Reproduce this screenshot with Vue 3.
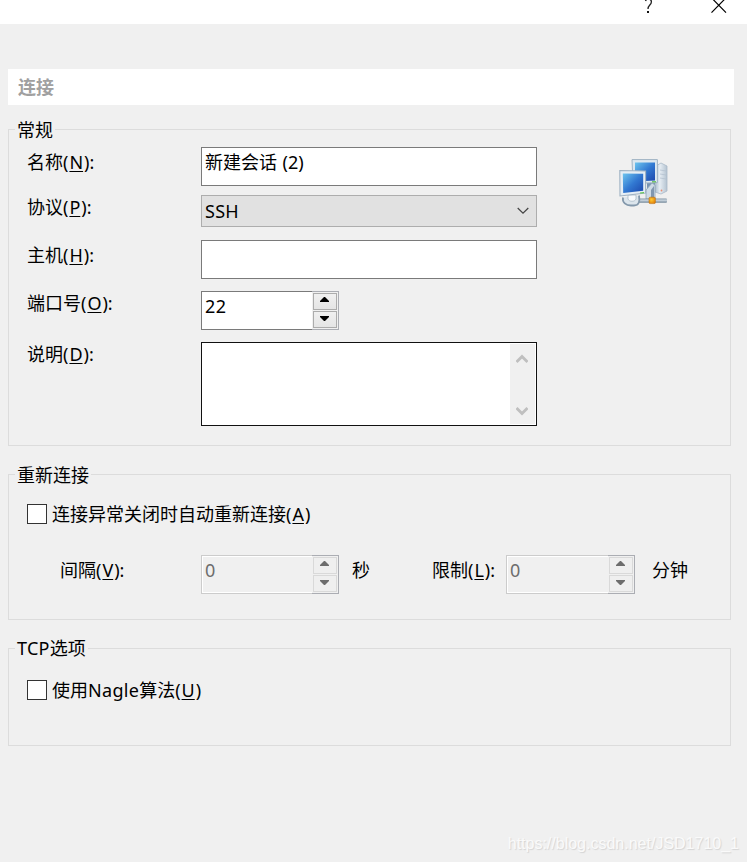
<script setup>
import { ref } from 'vue'

const sessionName = ref('新建会话 (2)')
const host = ref('')
const autoReconnect = ref(false)
const nagle = ref(false)
</script>

<template>
  <main class="dialog">
    <header class="titlebar">
      <svg class="help" width="12" height="24" viewBox="0 0 12 24">
        <path d="M1.5 1C2 -1.4 7.4 -1.8 7.4 1.8C7.4 5.2 4 5 4 9" fill="none" stroke="#222" stroke-width="1.3" />
        <path d="M3 11h2v2H3z" fill="#111" />
      </svg>
      <svg class="close" width="16" height="24" viewBox="0 0 16 24">
        <path d="M.5 -2.2L15 12.7M15 -2.2L.5 12.7" fill="none" stroke="#000" stroke-width="1.2" />
      </svg>
    </header>

    <h1 class="heading">连接</h1>

    <section class="group general">
      <h2 class="legend">常规</h2>
      <div class="fields">
        <div class="row r-name">
          <label class="label">名称(<u>N</u>):</label>
          <div class="box text">{{ sessionName }}</div>
        </div>
        <div class="row r-protocol">
          <label class="label">协议(<u>P</u>):</label>
          <div class="combo">
            <span class="latin">SSH</span>
            <svg width="12" height="8" viewBox="0 0 12 8"><path d="M.7 1L6 6.2L11.3 1" fill="none" stroke="#444" stroke-width="1.2" /></svg>
          </div>
        </div>
        <div class="row r-host">
          <label class="label">主机(<u>H</u>):</label>
          <div class="box text">{{ host }}</div>
        </div>
        <div class="row r-port">
          <label class="label">端口号(<u>O</u>):</label>
          <div class="spin">
            <div class="value">22</div>
            <div class="updown">
              <div class="btn up"><svg width="9" height="5" viewBox="0 0 9 5"><path d="M4 0h1l4 4v1H0V4z" /></svg></div>
              <div class="btn down"><svg width="9" height="5" viewBox="0 0 9 5"><path d="M0 0h9v1L5 5H4L0 1z" /></svg></div>
            </div>
          </div>
        </div>
        <div class="row r-desc">
          <label class="label">说明(<u>D</u>):</label>
          <div class="area">
            <div class="scroll">
              <svg width="12" height="10" viewBox="0 0 12 10"><path d="M.5 8L6 2.5L11.5 8" fill="none" stroke="#bfbfbf" stroke-width="2.9" /></svg>
              <svg width="12" height="10" viewBox="0 0 12 10"><path d="M.5 2L6 7.5L11.5 2" fill="none" stroke="#bfbfbf" stroke-width="2.9" /></svg>
            </div>
          </div>
        </div>
      </div>
      <svg class="network" width="50" height="50" viewBox="0 0 50 50">
        <defs>
          <linearGradient id="screen" x1="0" y1="0" x2="1" y2="1">
            <stop offset="0" stop-color="#6cc4ee" />
            <stop offset=".5" stop-color="#3279d2" />
            <stop offset="1" stop-color="#1c47ac" />
          </linearGradient>
          <linearGradient id="case" x1="0" y1="0" x2="1" y2="0">
            <stop offset="0" stop-color="#a9bccd" />
            <stop offset=".4" stop-color="#e6edf3" />
            <stop offset="1" stop-color="#b4c3d1" />
          </linearGradient>
          <linearGradient id="pipe" x1="0" y1="0" x2="0" y2="1">
            <stop offset="0" stop-color="#8496a6" />
            <stop offset=".4" stop-color="#cbd6df" />
            <stop offset="1" stop-color="#6f8496" />
          </linearGradient>
          <radialGradient id="node" cx=".4" cy=".4" r=".7">
            <stop offset="0" stop-color="#ffcb30" />
            <stop offset="1" stop-color="#e07a08" />
          </radialGradient>
        </defs>
        <path d="M37 7l5-3 6 3v25l-6 3-6-2z" fill="url(#case)" stroke="#a9b9c8" stroke-width=".8" />
        <path d="M41 11l6 1M41 15l6 1M41 19l6 1" stroke="#b4c2cf" stroke-width=".8" />
        <circle cx="42.5" cy="31.5" r=".9" fill="#ec8d70" />
        <path d="M28 24h8v14h-8z" fill="#7793b2" />
        <path d="M13 .6h25.4v23L14 24.5z" fill="#dde8f0" stroke="#9fb2c3" stroke-width="1" />
        <path d="M16 3.6h20v18L16 22.4z" fill="url(#screen)" />
        <path d="M33 22.8h4" stroke="#58bd48" stroke-width="1.2" />
        <path d="M27 31l6-7 3 2v14h-9z" fill="#cedbe6" stroke="#8ea3b8" stroke-width=".8" />
        <path d="M32 31l3-4v12h-3z" fill="#8097b0" />
        <rect x="14" y="39.5" width="34" height="4.3" rx="1" fill="url(#pipe)" />
        <path d="M4 38.5c-1 5 3 8 8 8h3c5 0 6-4 5-10" fill="#dce5ec" stroke="#8398ab" stroke-width="1.8" />
        <path d="M9 36h8v4c-1 3-7 3-8 0z" fill="#f8fafc" stroke="#a2b3c2" stroke-width=".7" />
        <path d="M.8 11.5L26.6 12V34L1 37z" fill="#e5eef5" stroke="#9fb2c3" stroke-width="1.1" />
        <path d="M3.8 14.6l20.4.2v17L4.2 34z" fill="url(#screen)" />
        <path d="M21 34l4-.4" stroke="#63c94e" stroke-width="1.2" />
        <rect x="30" y="38.2" width="6.4" height="6.4" rx="1.2" fill="url(#node)" stroke="#be7617" stroke-width=".6" />
      </svg>
    </section>

    <section class="group reconnect">
      <h2 class="legend">重新连接</h2>
      <label class="check">
        <span class="tick" role="checkbox" :aria-checked="autoReconnect"></span>
        <span>连接异常关闭时自动重新连接(<u>A</u>)</span>
      </label>
      <div class="timing">
        <span class="t-interval">间隔(<u>V</u>):</span>
        <div class="spin off">
          <div class="value">0</div>
          <div class="updown">
            <div class="btn up"><svg width="9" height="5" viewBox="0 0 9 5"><path d="M4 0h1l4 4v1H0V4z" /></svg></div>
            <div class="btn down"><svg width="9" height="5" viewBox="0 0 9 5"><path d="M0 0h9v1L5 5H4L0 1z" /></svg></div>
          </div>
        </div>
        <span class="t-sec">秒</span>
        <span class="t-limit">限制(<u>L</u>):</span>
        <div class="spin off narrow">
          <div class="value">0</div>
          <div class="updown">
            <div class="btn up"><svg width="9" height="5" viewBox="0 0 9 5"><path d="M4 0h1l4 4v1H0V4z" /></svg></div>
            <div class="btn down"><svg width="9" height="5" viewBox="0 0 9 5"><path d="M0 0h9v1L5 5H4L0 1z" /></svg></div>
          </div>
        </div>
        <span class="t-min">分钟</span>
      </div>
    </section>

    <section class="group tcp">
      <h2 class="legend"><span class="latin">TCP</span>选项</h2>
      <label class="check">
        <span class="tick" role="checkbox" :aria-checked="nagle"></span>
        <span>使用<span class="latin">Nagle</span>算法(<u>U</u>)</span>
      </label>
    </section>

    <footer class="watermark">https://blog.csdn.net/JSD1710_1</footer>
  </main>
</template>

<style>
body {
  margin: 0;
  background: #f0f0f0;
}
</style>

<style scoped>
* {
  box-sizing: border-box;
}
.dialog {
  display: flex;
  flex-direction: column;
  width: 747px;
  height: 862px;
  overflow: hidden;
  background: #f0f0f0;
  color: #000;
  font: 400 18px/24px "Noto Sans", "Noto Sans CJK SC", sans-serif;
  white-space: nowrap;
}
svg {
  display: block;
  flex: none;
}
u {
  margin: 0 1px;
  text-decoration-thickness: 1px;
  text-underline-offset: 2px;
}
.latin {
  letter-spacing: .3px;
}
.titlebar {
  display: flex;
  justify-content: flex-end;
  gap: 55px;
  height: 24px;
  padding-right: 20px;
  background: #fff;
}
.heading {
  height: 36px;
  margin: 45px 13px 0 8px;
  padding: 6px 10px;
  background: #fff;
  color: #a0a0a0;
  font-size: 18px;
  font-weight: 700;
}
.group {
  position: relative;
  width: 723px;
  margin-left: 8px;
  border: 1px solid #dcdcdc;
}
.legend {
  position: absolute;
  top: -12px;
  left: 6px;
  margin: 0;
  padding: 0 2px;
  background: #f0f0f0;
  font-size: 18px;
  font-weight: 400;
}
.tcp .legend {
  top: -13px;
}
.general {
  display: flex;
  height: 317px;
  margin-top: 24px;
  padding: 17px 0 0 18px;
}
.fields {
  width: 510px;
}
.row {
  display: flex;
  align-items: flex-start;
}
.label {
  width: 174px;
  padding-top: 3px;
}
.r-protocol {
  margin-top: 9px;
}
.r-protocol .label,
.r-port .label,
.r-desc .label {
  padding-top: 0;
}
.r-host {
  margin-top: 13px;
}
.r-port {
  margin-top: 12px;
}
.r-desc {
  margin-top: 12px;
}
.box {
  width: 336px;
  height: 39px;
  padding: 2px 3px;
  border: 1px solid #7a7a7a;
  background: #fff;
  word-spacing: .8px;
}
.combo {
  display: flex;
  align-items: center;
  justify-content: space-between;
  width: 336px;
  height: 32px;
  padding: 0 7px 0 3px;
  border: 1px solid #adadad;
  background: #e1e1e1;
}
.spin {
  display: flex;
  width: 138px;
  height: 39px;
}
.value {
  flex: 1;
  padding: 2px 3px;
  border: 1px solid #7a7a7a;
  border-right: 0;
  background: #fff;
  letter-spacing: .4px;
}
.updown {
  display: flex;
  flex-direction: column;
  gap: 1px;
  width: 27px;
  padding: 1px 1px 1px 1px;
  border: 1px solid #abadb3;
  border-left: 0;
  background: #f0f0f0;
}
.btn {
  display: flex;
  width: 24px;
  height: 17px;
  padding-left: 6px;
  border: 1px solid #acacac;
  background: linear-gradient(#f0f0f0, #e5e5e5);
}
.up {
  padding-top: 3px;
}
.down {
  padding-top: 4px;
}
.off .value {
  border-color: #ccc;
  box-shadow: inset 1px 1px #fff, inset 0 -1px #fff;
  background: #f0f0f0;
  color: #6d6d6d;
}
.off .btn {
  border-color: #d9d9d9;
  background: #efefef;
}
.off svg {
  fill: #6d6d6d;
}
.narrow {
  width: 129px;
}
.area {
  display: flex;
  justify-content: flex-end;
  width: 336px;
  height: 84px;
  padding: 1px;
  border: 1px solid #111;
  background: #fff;
}
.scroll {
  display: flex;
  flex-direction: column;
  align-items: flex-start;
  justify-content: space-between;
  width: 25px;
  padding: 10px 0 8px 6px;
  background: #f0f0f0;
}
.network {
  margin: 12px 0 0 82px;
}
.reconnect {
  height: 146px;
  margin-top: 28px;
  padding: 27px 0 0 18px;
}
.check {
  display: flex;
  align-items: center;
  gap: 5px;
  height: 24px;
}
.tick {
  width: 20px;
  height: 20px;
  border: 1px solid #333;
  background: #fff;
}
.timing {
  display: flex;
  align-items: flex-start;
  margin-top: 29px;
  padding-left: 33px;
}
.timing > span {
  padding-top: 3px;
}
.t-interval {
  width: 141px;
}
.t-sec {
  width: 93px;
  padding-left: 13px;
}
.t-limit {
  width: 74px;
}
.t-min {
  padding-left: 17px;
}
.tcp {
  height: 98px;
  margin-top: 28px;
  padding: 29px 0 0 18px;
}
.watermark {
  align-self: flex-end;
  margin: 88px 8px 0 0;
  color: #fafafa;
  font: 16px/20px "Liberation Sans", sans-serif;
  text-shadow: 1px 1px 1px #d4d4d4;
}
</style>
